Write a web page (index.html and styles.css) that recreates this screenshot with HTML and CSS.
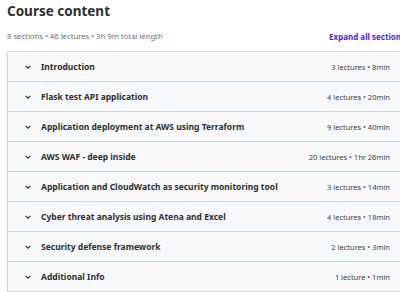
FILE: index.html
```html
<!DOCTYPE html>
<html lang="en">
<head>
    <meta charset="UTF-8">
    <meta name="viewport" content="width=device-width, initial-scale=1.0">
    <title>Course content</title>
    <link rel="stylesheet" href="styles.css">
</head>
<body>
    <div class="page">
        <h2 class="heading">Course content</h2>
        <div class="summary">
            <span class="meta">8 sections • 46 lectures • 3h 9m total length</span>
            <button class="expand">Expand all sections</button>
        </div>
        <div class="sections">
            <div class="section">
                <span class="chevron"><svg viewBox="0 0 10 10" width="8" height="8"><path d="M2 3.5 L5 6.5 L8 3.5" fill="none" stroke="#2d2f31" stroke-width="1.4"/></svg></span>
                <span class="title">Introduction</span>
                <span class="info">3 lectures • 8min</span>
            </div>
            <div class="section">
                <span class="chevron"><svg viewBox="0 0 10 10" width="8" height="8"><path d="M2 3.5 L5 6.5 L8 3.5" fill="none" stroke="#2d2f31" stroke-width="1.4"/></svg></span>
                <span class="title">Flask test API application</span>
                <span class="info">4 lectures • 20min</span>
            </div>
            <div class="section">
                <span class="chevron"><svg viewBox="0 0 10 10" width="8" height="8"><path d="M2 3.5 L5 6.5 L8 3.5" fill="none" stroke="#2d2f31" stroke-width="1.4"/></svg></span>
                <span class="title">Application deployment at AWS using Terraform</span>
                <span class="info">9 lectures • 40min</span>
            </div>
            <div class="section">
                <span class="chevron"><svg viewBox="0 0 10 10" width="8" height="8"><path d="M2 3.5 L5 6.5 L8 3.5" fill="none" stroke="#2d2f31" stroke-width="1.4"/></svg></span>
                <span class="title">AWS WAF - deep inside</span>
                <span class="info">20 lectures • 1hr 26min</span>
            </div>
            <div class="section">
                <span class="chevron"><svg viewBox="0 0 10 10" width="8" height="8"><path d="M2 3.5 L5 6.5 L8 3.5" fill="none" stroke="#2d2f31" stroke-width="1.4"/></svg></span>
                <span class="title">Application and CloudWatch as security monitoring tool</span>
                <span class="info">3 lectures • 14min</span>
            </div>
            <div class="section">
                <span class="chevron"><svg viewBox="0 0 10 10" width="8" height="8"><path d="M2 3.5 L5 6.5 L8 3.5" fill="none" stroke="#2d2f31" stroke-width="1.4"/></svg></span>
                <span class="title">Cyber threat analysis using Atena and Excel</span>
                <span class="info">4 lectures • 18min</span>
            </div>
            <div class="section">
                <span class="chevron"><svg viewBox="0 0 10 10" width="8" height="8"><path d="M2 3.5 L5 6.5 L8 3.5" fill="none" stroke="#2d2f31" stroke-width="1.4"/></svg></span>
                <span class="title">Security defense framework</span>
                <span class="info">2 lectures • 3min</span>
            </div>
            <div class="section">
                <span class="chevron"><svg viewBox="0 0 10 10" width="8" height="8"><path d="M2 3.5 L5 6.5 L8 3.5" fill="none" stroke="#2d2f31" stroke-width="1.4"/></svg></span>
                <span class="title">Additional Info</span>
                <span class="info">1 lecture • 1min</span>
            </div>
        </div>
    </div>
</body>
</html>
```

FILE: styles.css
```css
body {
    margin: 0;
    padding: 0;
    background-color: #fff;
    font-family: "Noto Sans", Arial, sans-serif;
    color: #2d2f31;
    overflow: hidden;
}
.page {
    width: 398px;
    padding: 0 0 0 7px;
}
.heading {
    margin: 0;
    padding-top: 1px;
    font-size: 13.5px;
    font-weight: 700;
    line-height: 20px;
}
.summary {
    display: flex;
    justify-content: space-between;
    align-items: center;
    height: 30px;
}
.meta {
    font-size: 7.7px;
    color: #6a6f73;
}
.expand {
    border: none;
    background: none;
    padding: 0;
    margin-left: 8px;
    font-family: inherit;
    font-size: 8px;
    font-weight: 700;
    color: #5624d0;
    white-space: nowrap;
}
.sections {
    border: 1px solid #d1d7dc;
    border-right: none;
}
.section {
    display: flex;
    align-items: center;
    height: 29px;
    padding: 0 15px 0 16px;
    background-color: #f7f9fa;
    border-bottom: 1px solid #d1d7dc;
}
.section:last-child {
    border-bottom: none;
}
.chevron {
    display: flex;
    width: 17px;
}
.title {
    flex: 1;
    font-size: 8.5px;
    font-weight: 700;
}
.info {
    font-size: 7.5px;
    color: #3e4143;
}
```
